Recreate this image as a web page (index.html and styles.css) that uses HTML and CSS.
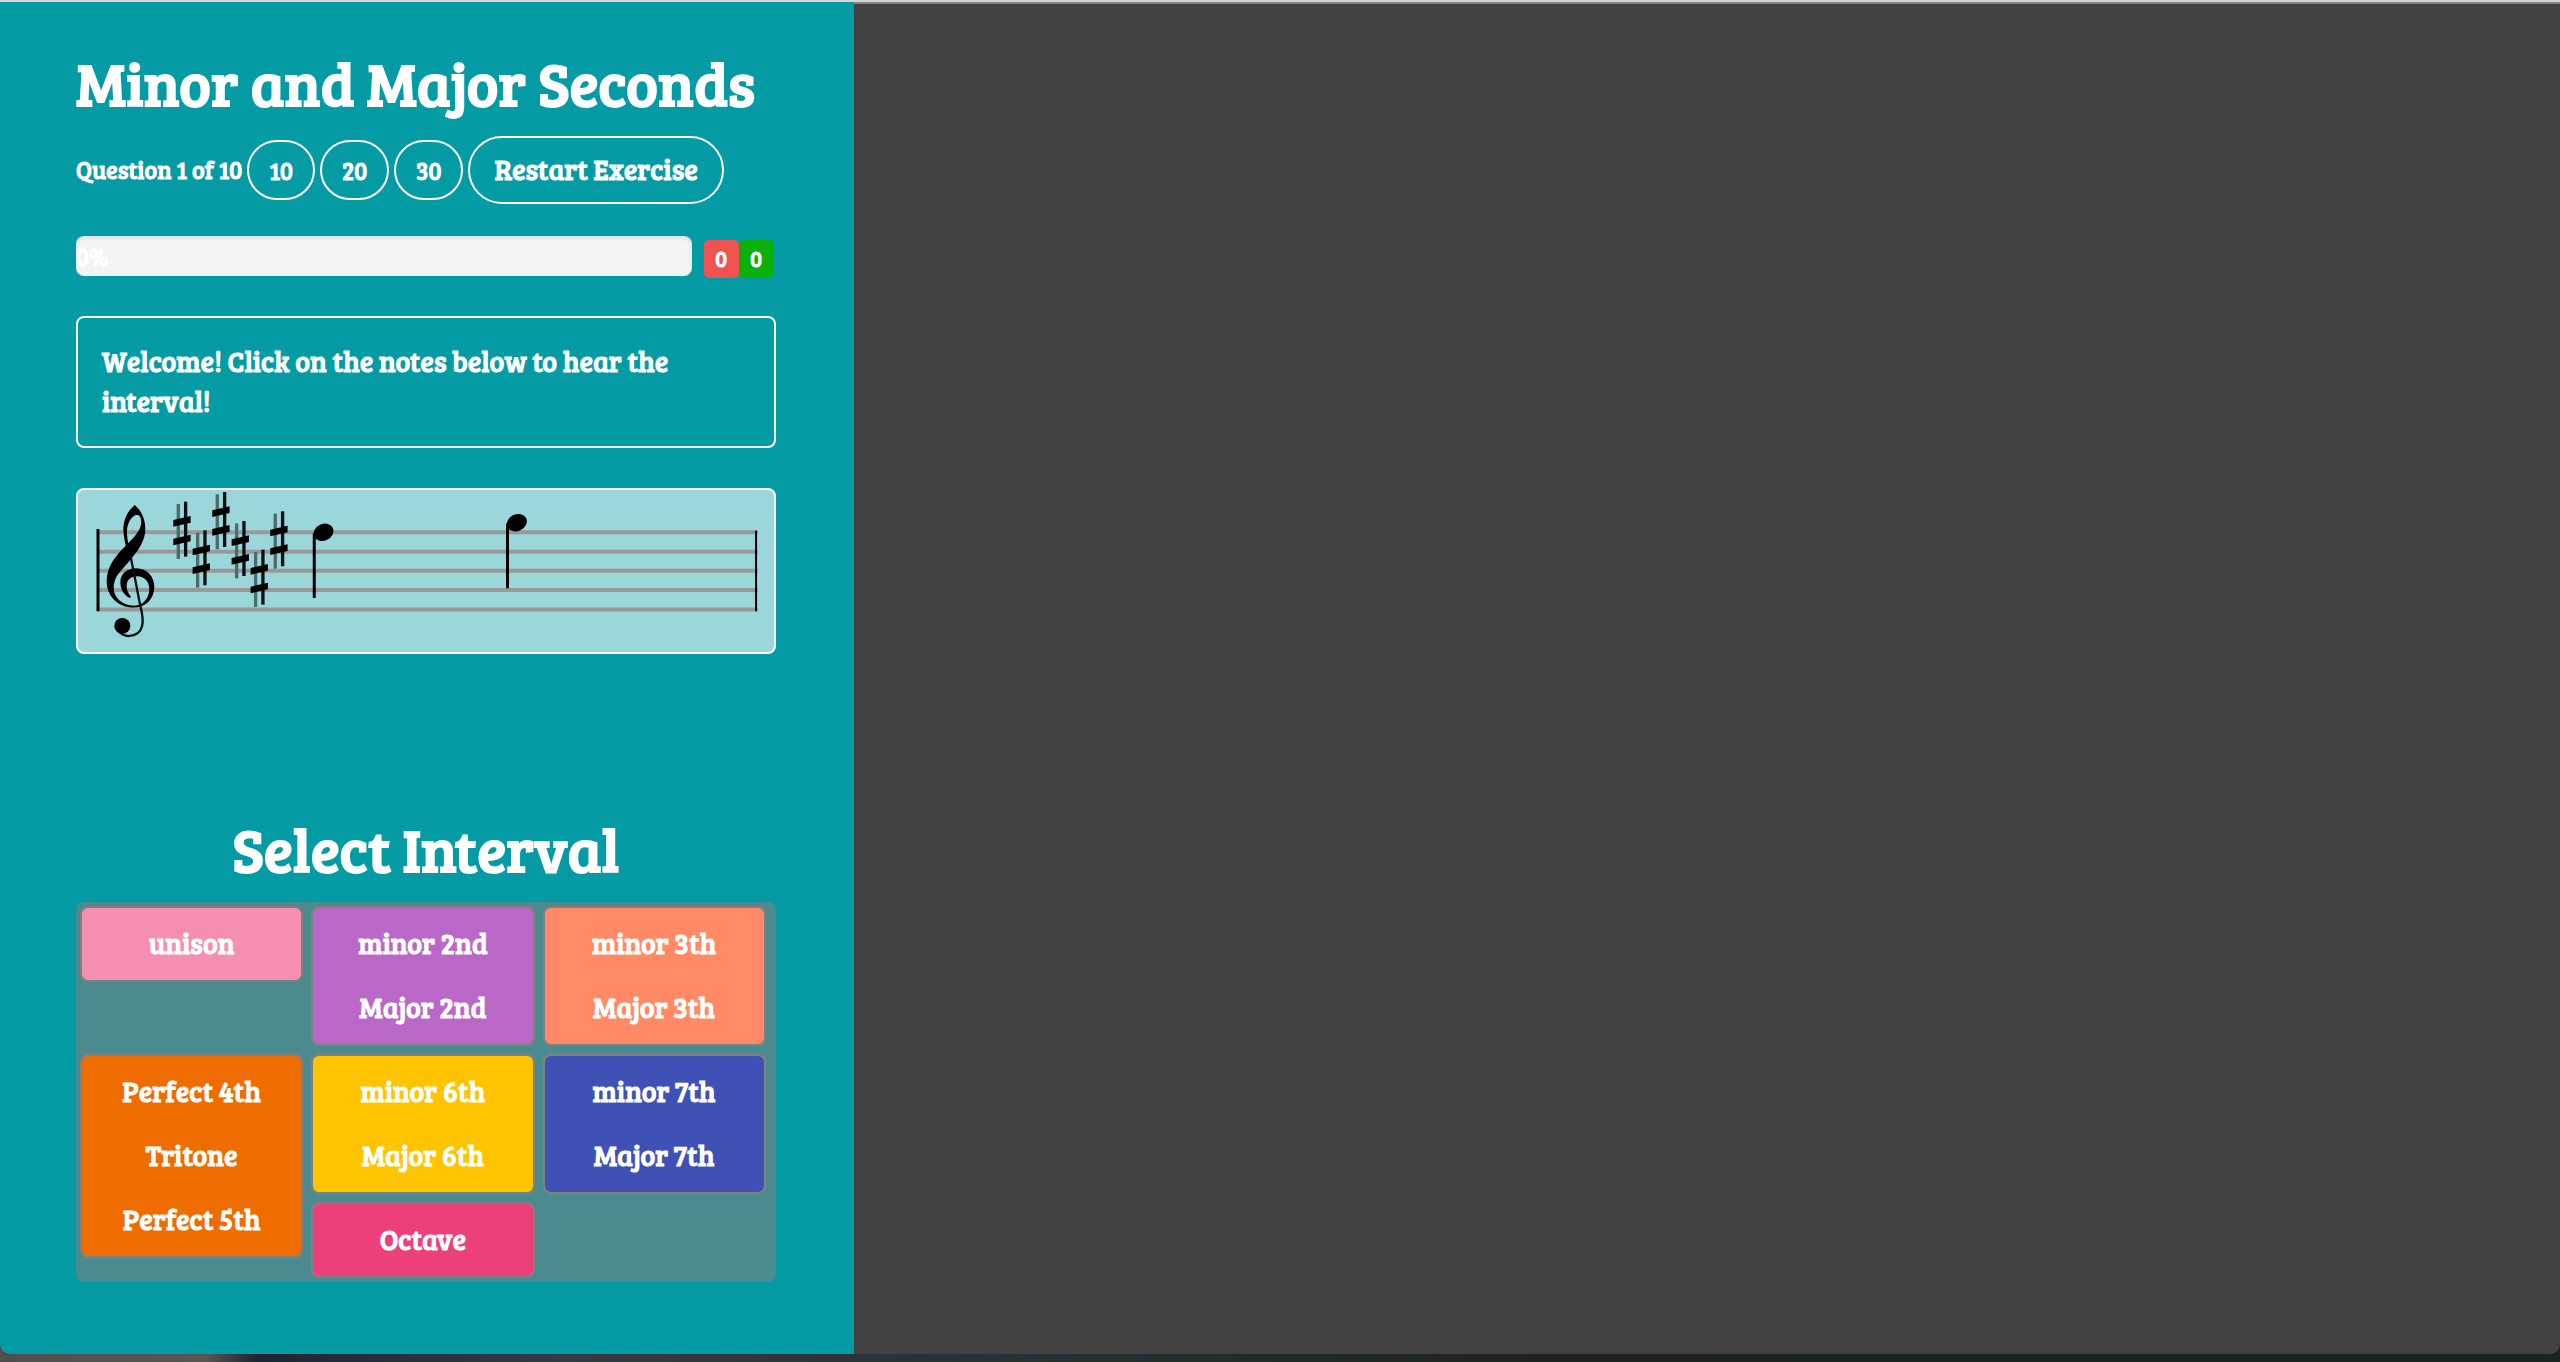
FILE: index.html
```html
<!DOCTYPE html>
<html lang="en">
<head>
<meta charset="utf-8">
<title>Minor and Major Seconds</title>
<link rel="stylesheet" href="styles.css">
</head>
<body>
<div class="window">
  <main class="panel">
    <h1 class="title">Minor and Major Seconds</h1>
    <div class="controls">
      <span class="counter">Question 1 of 10</span>
      <button class="pill" type="button">10</button>
      <button class="pill" type="button">20</button>
      <button class="pill" type="button">30</button>
      <button class="pill pill-large" type="button">Restart Exercise</button>
    </div>
    <div class="status">
      <div class="progress" role="progressbar" aria-label="Progress" aria-valuenow="0" aria-valuemin="0" aria-valuemax="100">0%</div>
      <div class="score">
        <span class="badge badge-wrong">0</span>
        <span class="badge badge-right">0</span>
      </div>
    </div>
    <p class="message">Welcome! Click on the notes below to hear the interval!</p>
    <div class="staff">
      <svg class="staff-drawing" viewBox="0 0 2088 486" role="img" aria-label="Treble clef, six sharps, two notes">
        <defs>
          <g id="sharp">
            <path d="M-11-80V85" stroke="#4d6a6c" stroke-width="10"/>
            <path d="M11-87V78" stroke="#0a1112" stroke-width="10"/>
            <path d="M-26-12L26-24V-44L-26-32ZM-26 44L26 32V12L-26 24Z"/>
          </g>
        </defs>
        <path d="M60 127H2040M60 185H2040M60 242H2040M60 300H2040M60 359H2040" stroke="#999" stroke-width="12"/>
        <path d="M60 117V364" stroke="#000" stroke-width="9"/>
        <path d="M2035 122V364" stroke="#000" stroke-width="6"/>
        <g transform="translate(6 -30)">
          <path d="M164 75C145 92 130 115 130 150C131 172 136 192 140 208L148 203C143 182 140 166 141 150C143 128 154 106 172 104L184 108Z"/>
          <path d="M164 75C180 88 196 112 196 148C196 185 170 218 146 246C120 276 101 290 101 325C102 355 130 377 160 377C192 378 208 352 208 328C208 304 192 289 172 289C152 289 140 300 140 318C140 332 145 340 153 350L149 354C131 345 121 326 121 305C122 282 140 266 168 265C202 265 223 290 223 322C222 360 195 383 160 383C115 382 80 350 80 303C80 258 108 226 140 194C164 170 184 150 184 125C184 112 178 104 170 104Z"/>
          <path d="M151 225C160 270 172 330 181 378C194 425 192 466 148 468C134 469 124 463 115 453" fill="none" stroke="#0a1112" stroke-width="7"/>
          <circle cx="127" cy="438" r="24"/>
          <use href="#sharp" x="306" y="152"/>
          <use href="#sharp" x="364" y="238"/>
          <use href="#sharp" x="423" y="123"/>
          <use href="#sharp" x="481" y="210"/>
          <use href="#sharp" x="538" y="296"/>
          <use href="#sharp" x="597" y="181"/>
          <ellipse cx="731" cy="157" rx="31" ry="25" transform="rotate(-25 731 157)"/>
          <path d="M703 160V354" stroke="#000" stroke-width="9"/>
          <ellipse cx="1311" cy="128" rx="31" ry="25" transform="rotate(-25 1311 128)"/>
          <path d="M1283 131V325" stroke="#000" stroke-width="9"/>
        </g>
      </svg>
    </div>
    <h2 class="title title-center">Select Interval</h2>
    <div class="intervals">
      <div class="group pink"><button type="button">unison</button></div>
      <div class="group purple"><button type="button">minor 2nd</button><button type="button">Major 2nd</button></div>
      <div class="group coral"><button type="button">minor 3th</button><button type="button">Major 3th</button></div>
      <div class="group orange"><button type="button">Perfect 4th</button><button type="button">Tritone</button><button type="button">Perfect 5th</button></div>
      <div class="group yellow"><button type="button">minor 6th</button><button type="button">Major 6th</button></div>
      <div class="group blue"><button type="button">minor 7th</button><button type="button">Major 7th</button></div>
      <div class="group rose"><button type="button">Octave</button></div>
    </div>
  </main>
</div>
</body>
</html>
```
FILE: styles.css
```css
* { box-sizing: border-box; }
body {
  margin: 0;
  min-height: 100vh;
  display: flex;
  padding: 2px 0 8px;
  background: linear-gradient(#d6d6d6, #d6d6d6) top / 100% 2px no-repeat,
    linear-gradient(90deg, #4f4f4d 0, #575653 8%, #1c2632 10%, #353b42 22%, #2a3134 38%, #1e2224 60%, #1d2223 100%);
  color: #fff;
  font-family: "Bree Serif", "DejaVu Serif Condensed", "DejaVu Serif", serif;
  font-weight: bold;
}
.window {
  flex: 1;
  display: flex;
  background: linear-gradient(#848484, #848484) top / 100% 2px no-repeat, #424242;
  border-radius: 0 0 10px 10px;
  overflow: hidden;
}
.panel {
  width: 33.35%;
  padding: 40px 78px 72px 76px;
  background: #059ba5;
}
.title {
  margin: 0;
  font-size: 60px;
  line-height: 80px;
  font-weight: bold;
  white-space: nowrap;
}
.title-center { text-align: center; margin-top: 154px; }
.controls {
  display: flex;
  align-items: center;
  gap: 5px;
  margin-top: 14px;
  white-space: nowrap;
}
.counter { font-size: 24px; padding-bottom: 2px; }
button {
  font: inherit;
  color: inherit;
  background: none;
  border: 0;
  padding: 0;
  cursor: pointer;
}
.pill {
  height: 60px;
  padding: 0 20px;
  border: 2px solid #fff;
  border-radius: 30px;
  font-size: 24px;
}
.pill-large { height: 68px; padding: 0 24px 2px; border-radius: 34px; font-size: 28px; }
.status { display: flex; gap: 12px; margin-top: 32px; }
.progress {
  flex: 1;
  height: 40px;
  border-radius: 8px;
  background: #f4f4f4;
  box-shadow: inset 0 2px 4px rgba(0, 0, 0, .1);
  font-size: 24px;
  line-height: 42px;
}
.score { display: flex; padding: 4px 2px 0 0; }
.badge {
  width: 35px;
  height: 38px;
  border-radius: 5px;
  font-size: 22px;
  line-height: 36px;
  text-align: center;
}
.badge-wrong { background: #ef5350; }
.badge-right { background: #0bb00b; }
.message {
  margin: 38px 0 0;
  padding: 23px 24px 25px;
  border: 2px solid #fff;
  border-radius: 8px;
  font-size: 28px;
  line-height: 40px;
}
.staff {
  margin-top: 40px;
  border: 2px solid #fff;
  border-radius: 8px;
  background: #9bd7da;
}
.staff-drawing { display: block; width: 100%; }
.intervals {
  display: grid;
  grid-template-columns: repeat(3, 1fr);
  gap: 8px;
  align-items: start;
  margin-top: 14px;
  padding: 4px 10px 4px 4px;
  border-radius: 8px;
  background: #4b8b8f;
}
.group {
  display: flex;
  flex-direction: column;
  padding: 4px 0;
  border: 2px solid #808080;
  border-radius: 8px;
}
.group button { height: 64px; padding-bottom: 2px; font-size: 28px; }
.pink { background: #f48fb1; }
.purple { background: #ba68c8; }
.coral { background: #ff8a65; }
.orange { background: #ef6c00; grid-row: 2 / span 2; }
.yellow { background: #ffc400; }
.blue { background: #3f51b5; }
.rose { background: #ec407a; grid-column: 2; }
```
